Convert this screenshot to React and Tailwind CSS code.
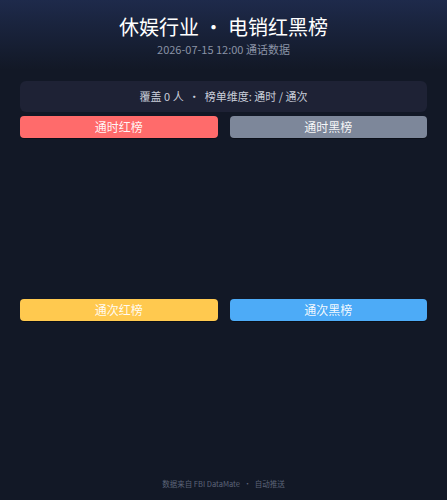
import React from 'react';

const boards = [
    { id: 'time-red', title: '通时红榜', color: 'bg-[#ff6b6b]' },
    { id: 'time-black', title: '通时黑榜', color: 'bg-[#7d879a]' },
    { id: 'count-red', title: '通次红榜', color: 'bg-[#ffc94f]' },
    { id: 'count-black', title: '通次黑榜', color: 'bg-[#4dabf7]' },
];

const font = { fontFamily: '"Noto Sans CJK SC", "Noto Sans", sans-serif' };

const BoardSection = ({ board }) => (
    <div className="flex flex-col">
        <div
            className={`h-[22px] rounded-[4px] ${board.color} shadow-[0_1px_0_rgba(0,0,0,0.35)] flex items-center justify-center text-white/95 text-[12px] leading-none`}
        >
            {board.title}
        </div>
        {/* list is empty */}
        <div className="h-[145px]" />
    </div>
);

export default function App() {
    return (
        <div className="w-[447px] h-[500px] bg-[#121826] flex flex-col overflow-hidden" style={font}>
            {/* Header */}
            <div className="shrink-0 h-[70px] bg-gradient-to-b from-[#1e2a4b] to-[#121826] flex flex-col items-center pt-[13px]">
                <h1 className="text-[20px] leading-[28px] text-white">
                    休娱行业 · 电销红黑榜
                </h1>
                <p className="text-[11px] leading-[14px] text-[#8a93a6] mt-[1px]">
                    2026-07-15 12:00 通话数据
                </p>
            </div>

            <div className="px-[20px] pt-[11px] flex-1 flex flex-col">
                {/* Summary */}
                <div className="shrink-0 h-[31px] rounded-[6px] bg-[#1e2235] flex items-center justify-center text-[11px] text-[#c9ceda]">
                    覆盖 0 人 <span className="mx-[5px]">·</span> 榜单维度: 通时 / 通次
                </div>

                <div className="shrink-0 grid grid-cols-2 gap-x-[12px] gap-y-[16px] mt-[4px]">
                    {boards.map((b) => (
                        <BoardSection key={b.id} board={b} />
                    ))}
                </div>

                <div className="flex-1" />

                {/* Footer */}
                <div className="shrink-0 pb-[11px] text-center text-[7.5px] text-[#5c6478]">
                    数据来自 FBI DataMate <span className="mx-[2px]">·</span> 自动推送
                </div>
            </div>
        </div>
    );
}
